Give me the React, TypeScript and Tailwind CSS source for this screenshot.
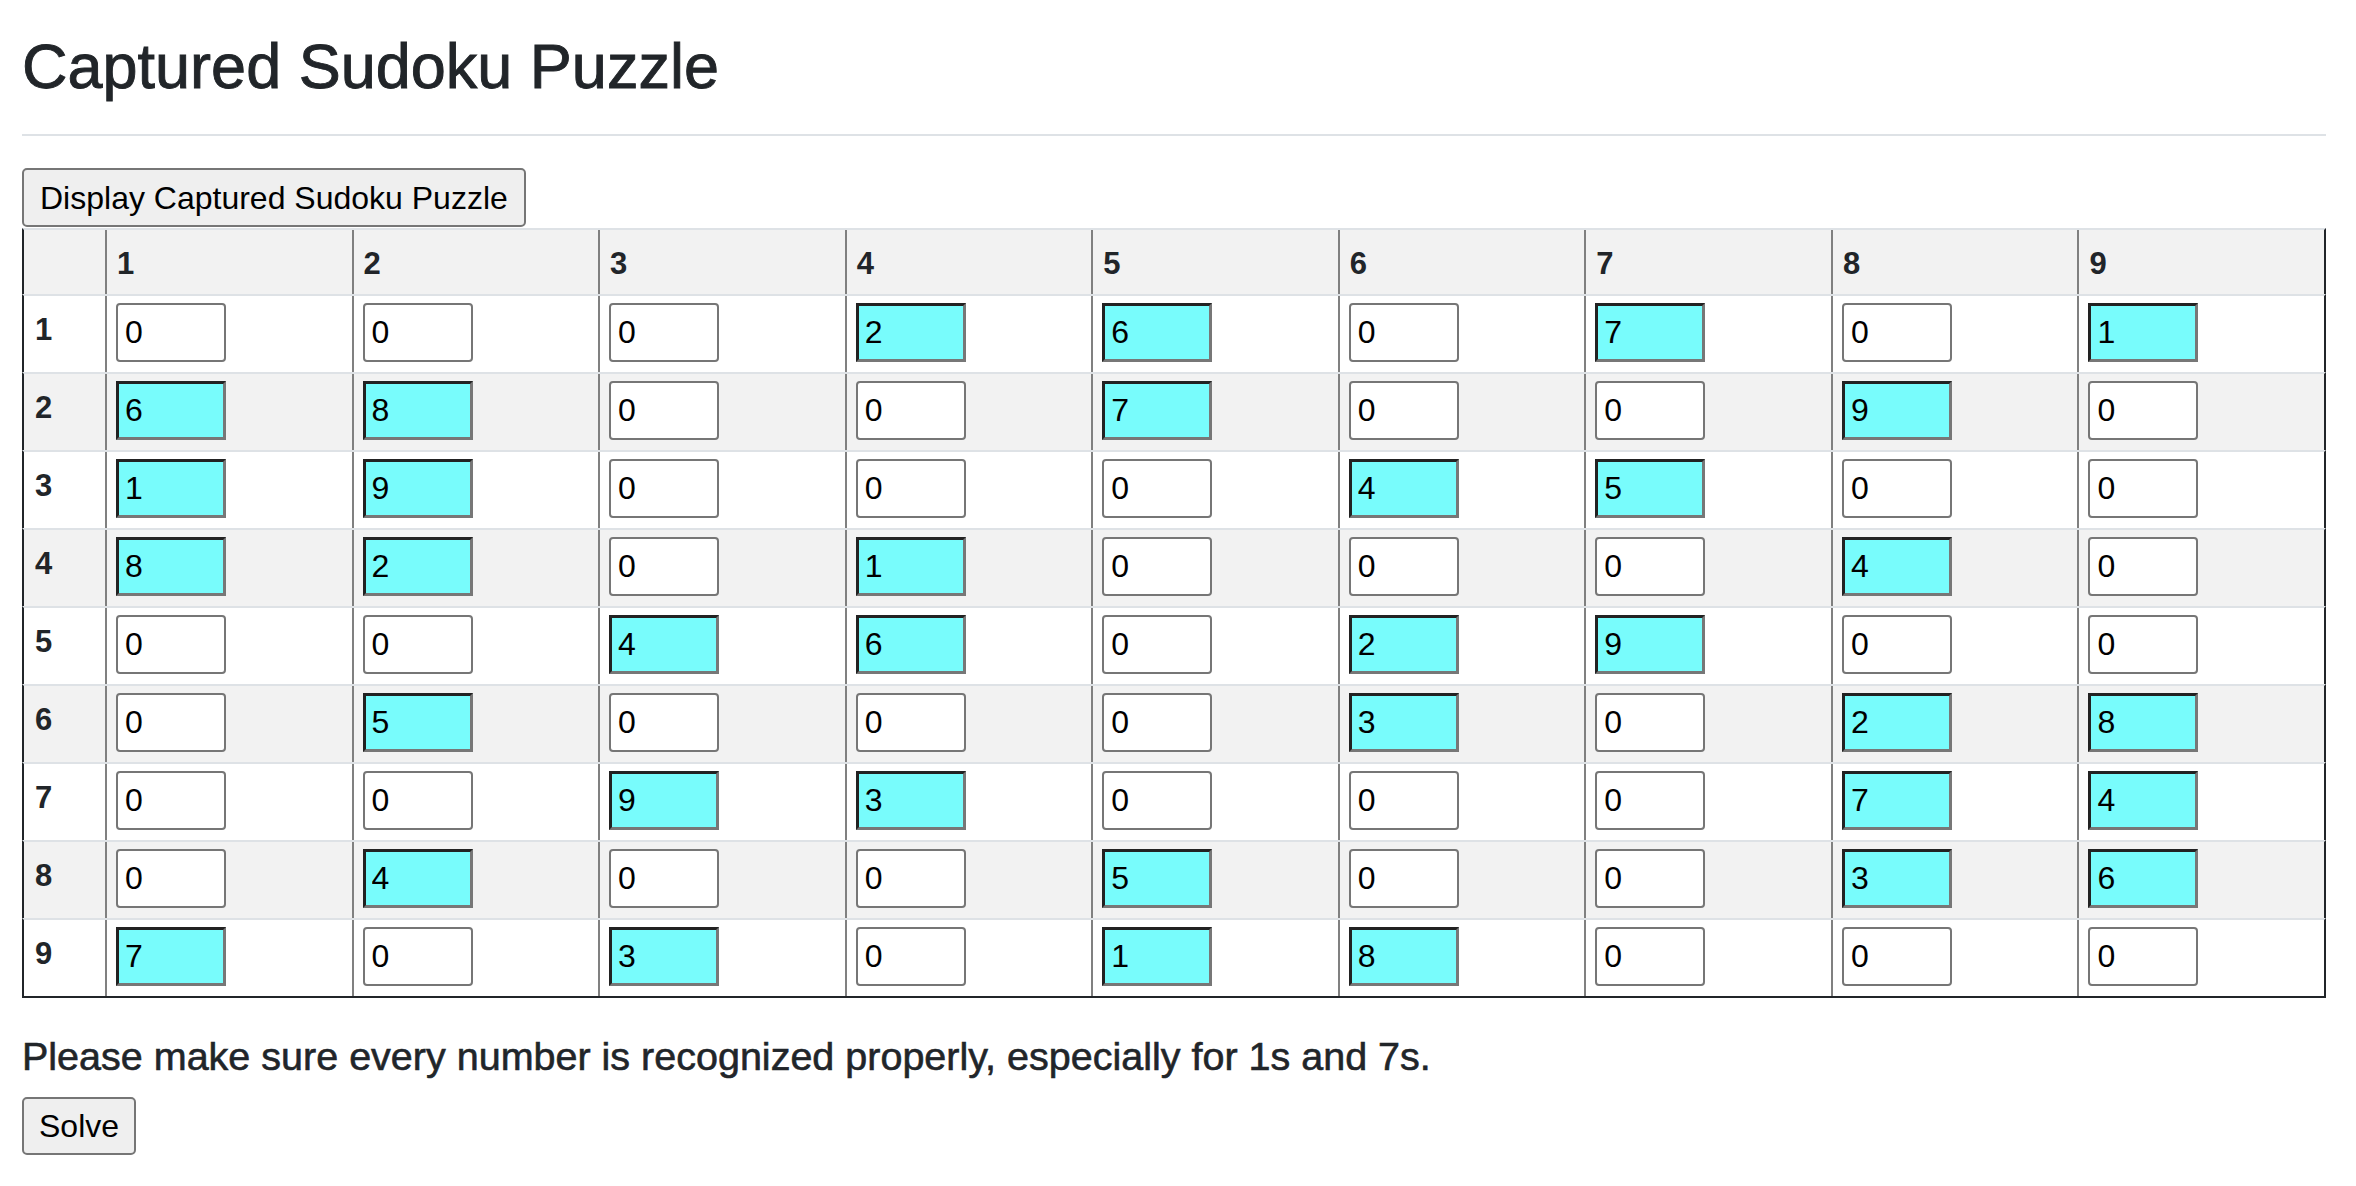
import React from "react"

const puzzle = [
  [0, 0, 0, 2, 6, 0, 7, 0, 1],
  [6, 8, 0, 0, 7, 0, 0, 9, 0],
  [1, 9, 0, 0, 0, 4, 5, 0, 0],
  [8, 2, 0, 1, 0, 0, 0, 4, 0],
  [0, 0, 4, 6, 0, 2, 9, 0, 0],
  [0, 5, 0, 0, 0, 3, 0, 2, 8],
  [0, 0, 9, 3, 0, 0, 0, 7, 4],
  [0, 4, 0, 0, 5, 0, 0, 3, 6],
  [7, 0, 3, 0, 1, 8, 0, 0, 0],
]

const cols = [1, 2, 3, 4, 5, 6, 7, 8, 9]

function Cell({ value }: { value: number }) {
  const filled = value !== 0
  return (
    <input
      type="text"
      defaultValue={String(value)}
      className={
        filled
          ? "block w-[110px] h-[59px] pl-[6px] text-[32px] leading-none text-black bg-[#78fcfc] border-[3px] border-t-[#222222] border-l-[#222222] border-b-[#777777] border-r-[#777777] outline-none"
          : "block w-[110px] h-[59px] pl-[7px] text-[32px] leading-none text-black bg-white border-2 border-[#767676] rounded-[4px] outline-none"
      }
    />
  )
}

export default function App() {
  return (
    <div className="min-h-screen bg-white text-[#212529] font-['Liberation_Sans',Arial,sans-serif]">
      <div className="ml-[22px] w-[2304px] pt-[28px]">
        <h1 className="text-[63px] leading-[76px] font-medium [-webkit-text-stroke:0.9px_#212529]">Captured Sudoku Puzzle</h1>
        <hr className="mt-[30px] border-0 border-t-2 border-[#dee2e6]" />

        <button className="mt-[32px] h-[59px] px-[16px] text-[32px] leading-none text-black bg-[#efefef] border-2 border-[#767676] rounded-[5px]">
          Display Captured Sudoku Puzzle
        </button>

        {/* Puzzle grid */}
        <div className="mt-[1px] border-b-2 border-[#212529]">
          <div className="h-[66px] bg-[#f2f2f2] border-t-2 border-t-[#dee2e6] border-x-2 border-x-[#212529] grid grid-cols-[81px_repeat(9,minmax(0,1fr))]">
            <div />
            {cols.map((c) => (
              <div key={c} className="border-l-2 border-[#808080] pl-[10px] pt-[16px] text-[31px] leading-[36px] font-bold">
                {c}
              </div>
            ))}
          </div>
          {puzzle.map((row, r) => (
            <div
              key={r}
              className={
                (r % 2 === 1 ? "bg-[#f2f2f2] " : "bg-white ") +
                "h-[78px] border-t-2 border-t-[#dee2e6] border-x-2 border-x-[#212529] grid grid-cols-[81px_repeat(9,minmax(0,1fr))]"
              }
            >
              <div className="pl-[11px] pt-[16px] text-[31px] leading-[36px] font-bold">{r + 1}</div>
              {row.map((v, c) => (
                <div key={c} className="border-l-2 border-[#808080] pl-[9px] pt-[7px]">
                  <Cell value={v} />
                </div>
              ))}
            </div>
          ))}
        </div>

        <p className="mt-[35px] text-[39.5px] leading-[47px] font-medium [-webkit-text-stroke:0.6px_#212529]">
          Please make sure every number is recognized properly, especially for 1s and 7s.
        </p>
        <button className="mt-[17px] h-[58px] px-[15px] text-[32px] leading-none text-black bg-[#efefef] border-2 border-[#767676] rounded-[5px]">
          Solve
        </button>
      </div>
    </div>
  )
}
